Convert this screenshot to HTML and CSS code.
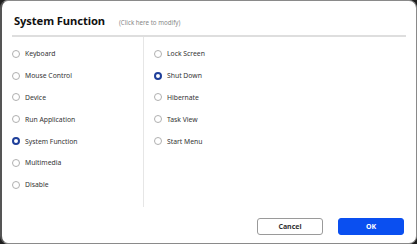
FILE: index.html
```html
<!DOCTYPE html>
<html>
<head>
<meta charset="utf-8">
<link rel="stylesheet" href="styles.css">
</head>
<body>
<div class="dialog">
  <div class="header">
    <span class="title">System Function</span>
    <span class="hint">(Click here to modify)</span>
  </div>
  <div class="divider"></div>
  <div class="content">
    <div class="col left">
      <div class="opt"><span class="radio"></span>Keyboard</div>
      <div class="opt"><span class="radio"></span>Mouse Control</div>
      <div class="opt"><span class="radio"></span>Device</div>
      <div class="opt"><span class="radio"></span>Run Application</div>
      <div class="opt"><span class="radio on"></span>System Function</div>
      <div class="opt"><span class="radio"></span>Multimedia</div>
      <div class="opt"><span class="radio"></span>Disable</div>
    </div>
    <div class="col right">
      <div class="opt"><span class="radio"></span>Lock Screen</div>
      <div class="opt"><span class="radio on"></span>Shut Down</div>
      <div class="opt"><span class="radio"></span>Hibernate</div>
      <div class="opt"><span class="radio"></span>Task View</div>
      <div class="opt"><span class="radio"></span>Start Menu</div>
    </div>
  </div>
  <div class="footer">
    <button class="btn cancel">Cancel</button>
    <button class="btn ok">OK</button>
  </div>
</div>
</body>
</html>
```
FILE: styles.css
```css
html, body {
  margin: 0;
  padding: 0;
  background: #1e1e1e;
}
body {
  width: 417px;
  height: 244px;
  font-family: "Noto Sans", "Open Sans", sans-serif;
  color: #222;
}
.dialog {
  box-sizing: border-box;
  width: 417px;
  height: 244px;
  background: #fff;
  border: 1px solid #8a8a8a;
  border-left: 2px solid #555;
  border-radius: 8px;
  display: flex;
  flex-direction: column;
}
.header {
  display: flex;
  align-items: baseline;
  padding: 12px 0 0 12px;
  height: 30px;
  box-sizing: border-box;
}
.title {
  font-size: 11.2px;
  font-weight: 700;
  color: #111;
  letter-spacing: -0.1px;
}
.hint {
  font-size: 6.2px;
  color: #888;
  margin-left: 14px;
}
.divider {
  height: 2px;
  background: #dedede;
  margin: 4px 10px 0 10px;
}
.content {
  display: flex;
  height: 170px;
}
.col {
  display: flex;
  flex-direction: column;
  padding-top: 6px;
}
.left {
  width: 131px;
  padding-left: 10px;
  border-right: 1px solid #e6e6e6;
}
.right {
  padding-left: 10px;
}
.opt {
  display: flex;
  align-items: center;
  height: 21.8px;
  font-size: 6.8px;
  color: #333;
}
.radio {
  box-sizing: border-box;
  width: 8px;
  height: 8px;
  border: 1px solid #b0b0b0;
  border-radius: 50%;
  margin-right: 5px;
  background: #fff;
}
.radio.on {
  border: 2.5px solid #1f3f9a;
}
.footer {
  display: flex;
  justify-content: flex-end;
  gap: 15px;
  padding: 11px 12px 0 0;
}
.btn {
  width: 66px;
  height: 17px;
  border-radius: 3px;
  font-family: "Noto Sans", "Open Sans", sans-serif;
  font-size: 7px;
  font-weight: 700;
  padding: 0;
}
.cancel {
  background: #fff;
  border: 1px solid #9a9a9a;
  color: #333;
}
.ok {
  background: #0a4ff0;
  border: 1px solid #0a4ff0;
  color: #fff;
}
```
